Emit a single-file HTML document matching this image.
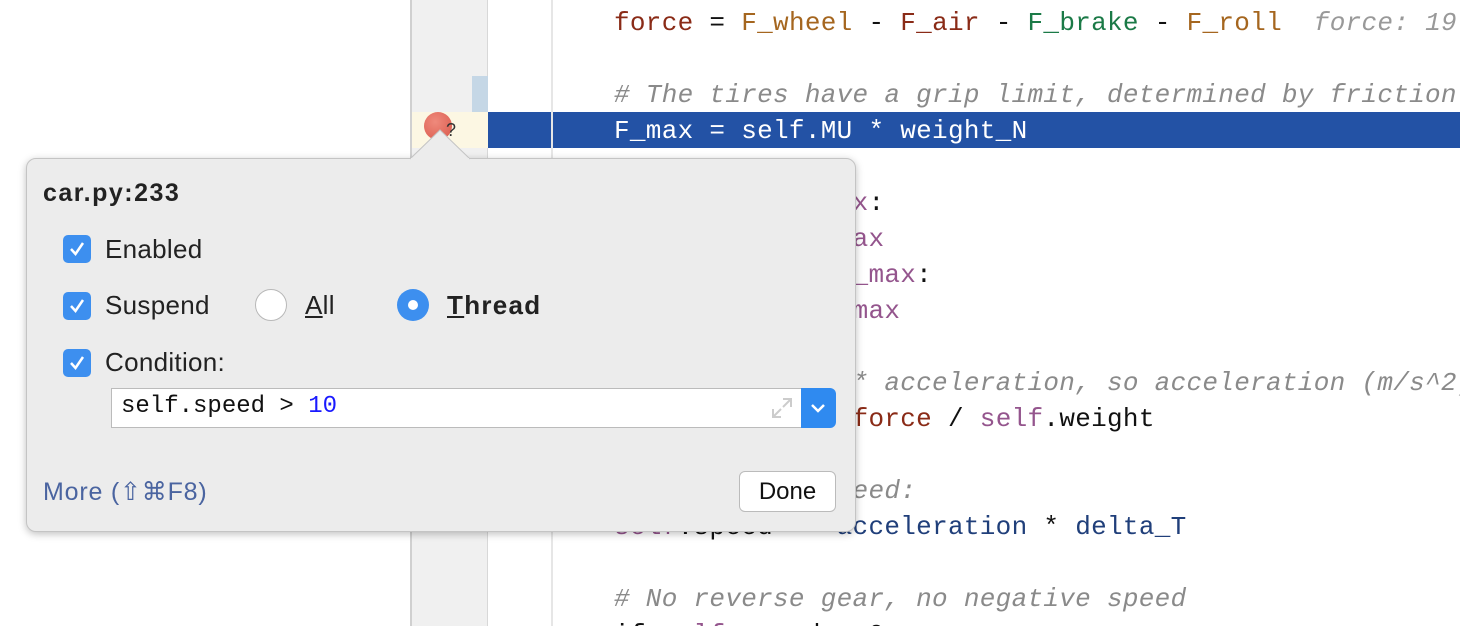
<!DOCTYPE html>
<html><head><meta charset="utf-8"><style>
*{margin:0;padding:0;box-sizing:border-box}
html,body{width:1460px;height:626px;overflow:hidden}
body{background:#fff;position:relative;font-family:"Liberation Sans",sans-serif}
#w{position:absolute;left:0;top:0;width:1460px;height:626px;overflow:hidden}
.gut{position:absolute;left:410px;top:0;width:78px;height:626px;background:#f0f0f0;border-left:2px solid #d0d0d0;border-right:1px solid #d8d8d8}
.vl{position:absolute;left:551px;top:0;width:2px;height:626px;background:#e6e6e6}
.code{position:absolute;left:614px;font-family:"Liberation Mono",monospace;font-size:26px;letter-spacing:0.3px;white-space:pre;line-height:36px;color:#111}
.k{color:#8a2b17}.o{color:#a5661f}.g{color:#1b7a47}.c{color:#8a8a8a;font-style:italic}.s{color:#94558d}.n{color:#203f7a}.h{color:#999;font-style:italic}
.pop{position:absolute;left:26px;top:158px;width:830px;height:374px;background:#ececec;border:1px solid #c4c4c4;border-radius:10px;box-shadow:0 2px 8px rgba(0,0,0,.25)}
.lbl{position:absolute;font-size:26px;color:#222;letter-spacing:0.3px}
.cb{position:absolute;width:28px;height:28px;background:#3d8fef;border-radius:5px}
.cb svg{position:absolute;left:4px;top:4px}
</style></head><body><div id="w">
<div class="gut"></div>
<div style="position:absolute;left:472px;top:76px;width:16px;height:36px;background:#c5d7e6"></div>
<div style="position:absolute;left:412px;top:112px;width:76px;height:36px;background:#fcf7e3"></div>
<div style="position:absolute;left:488px;top:112px;width:972px;height:36px;background:#2352a5"></div>
<div class="vl"></div>
<div style="position:absolute;left:424px;top:112px;width:28px;height:28px;border-radius:50%;background:radial-gradient(circle at 40% 35%,#ef8a7c,#d9574a)"></div>
<div style="position:absolute;left:446px;top:120px;font-size:18px;color:#333">?</div>
<div class="code" style="top:5px"><span class="k">force</span> = <span class="o">F_wheel</span> - <span class="k">F_air</span> - <span class="g">F_brake</span> - <span class="o">F_roll</span>  <span class="h">force: 19</span></div>
<div class="code c" style="top:77px"># The tires have a grip limit, determined by friction</div>
<div class="code" style="top:113px;color:#fff">F_max = self.MU * weight_N</div>
<div class="code" style="top:185px">if <span class="k">force</span> &gt; <span class="s">F_max</span>:</div>
<div class="code" style="top:221px">    <span class="k">force</span> = <span class="s">F_max</span></div>
<div class="code" style="top:257px">elif <span class="k">force</span> &lt; <span class="s">-F_max</span>:</div>
<div class="code" style="top:293px">    <span class="k">force</span> = <span class="s">-F_max</span></div>
<div class="code c" style="top:365px"># Force = mass * acceleration, so acceleration (m/s^2)</div>
<div class="code" style="top:401px"><span class="n">acceleration</span> = <span class="k">force</span> / <span class="s">self</span>.weight</div>
<div class="code c" style="top:473px"># Update the speed:</div>
<div class="code" style="top:509px"><span class="s">self</span>.speed += <span class="n">acceleration</span> * <span class="n">delta_T</span></div>
<div class="code c" style="top:581px"># No reverse gear, no negative speed</div>
<div class="code" style="top:617px">if <span class="s">self</span>.speed &lt; 0:</div>

<div class="pop">
<div style="position:absolute;left:16px;top:20px;font-size:25px;font-weight:bold;color:#222;letter-spacing:1.5px">car.py:233</div>
<div class="cb" style="left:36px;top:76px"><svg width="20" height="20"><path d="M4 10 L8.5 15 L16 4" stroke="#fff" stroke-width="2.5" fill="none"/></svg></div>
<div class="lbl" style="left:78px;top:75px">Enabled</div>
<div class="cb" style="left:36px;top:133px"><svg width="20" height="20"><path d="M4 10 L8.5 15 L16 4" stroke="#fff" stroke-width="2.5" fill="none"/></svg></div>
<div class="lbl" style="left:78px;top:131px">Suspend</div>
<div style="position:absolute;left:228px;top:130px;width:32px;height:32px;border-radius:50%;background:#fff;border:1px solid #b8b8b8"></div>
<div class="lbl" style="left:278px;top:131px"><u>A</u>ll</div>
<div style="position:absolute;left:370px;top:130px;width:32px;height:32px;border-radius:50%;background:#3d8fef"><div style="position:absolute;left:11px;top:11px;width:10px;height:10px;border-radius:50%;background:#fff"></div></div>
<div class="lbl" style="left:420px;top:131px;font-weight:bold;letter-spacing:1.3px"><u>T</u>hread</div>
<div class="cb" style="left:36px;top:190px"><svg width="20" height="20"><path d="M4 10 L8.5 15 L16 4" stroke="#fff" stroke-width="2.5" fill="none"/></svg></div>
<div class="lbl" style="left:78px;top:188px">Condition:</div>
<div style="position:absolute;left:84px;top:229px;width:692px;height:40px;background:#fff;border:1px solid #bbb"></div>
<div style="position:absolute;left:94px;top:234px;font-family:'Liberation Mono',monospace;font-size:24px;white-space:pre;color:#111">self.speed &gt; <span style="color:#1a1aff">10</span></div>
<svg style="position:absolute;left:742px;top:236px" width="26" height="26"><path d="M14 4h8v8M22 4l-8 8M4 14v8h8M4 22l8-8" stroke="#ccc" stroke-width="2" fill="none"/></svg>
<div style="position:absolute;left:774px;top:229px;width:35px;height:40px;background:#2f8af0;border-radius:0 6px 6px 0"><svg width="35" height="40"><path d="M11 17l6 6 6-6" stroke="#fff" stroke-width="2.5" fill="none"/></svg></div>
<div style="position:absolute;left:16px;top:318px;font-size:25px;color:#4a64a0;letter-spacing:0.8px">More (⇧⌘F8)</div>
<div style="position:absolute;left:712px;top:312px;width:97px;height:41px;background:#fff;border:1px solid #bbb;border-radius:6px;font-size:24px;text-align:center;line-height:39px;color:#111">Done</div>
</div>
<svg style="position:absolute;left:410px;top:128px" width="62" height="32"><path d="M0 31 L30 2 L60 31" fill="#ececec" stroke="#c4c4c4" stroke-width="1"/><rect x="1" y="30" width="58" height="3" fill="#ececec"/></svg>
</div></body></html>
